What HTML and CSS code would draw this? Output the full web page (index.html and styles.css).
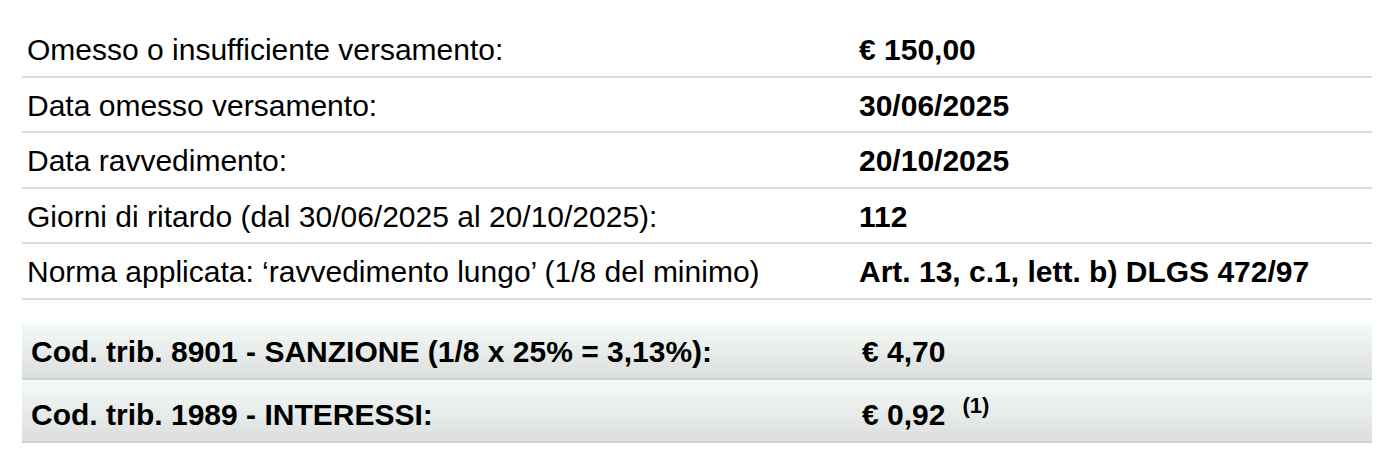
FILE: index.html
```html
<!DOCTYPE html>
<html lang="it">
<head>
<meta charset="utf-8">
<title>Ravvedimento</title>
<link rel="stylesheet" href="styles.css">
</head>
<body>
<div class="wrap">
  <table class="data">
    <tr><td class="lbl">Omesso o insufficiente versamento:</td><td class="val">€ 150,00</td></tr>
    <tr><td class="lbl">Data omesso versamento:</td><td class="val">30/06/2025</td></tr>
    <tr><td class="lbl">Data ravvedimento:</td><td class="val">20/10/2025</td></tr>
    <tr><td class="lbl">Giorni di ritardo (dal 30/06/2025 al 20/10/2025):</td><td class="val">112</td></tr>
    <tr><td class="lbl">Norma applicata: ‘ravvedimento lungo’ (1/8 del minimo)</td><td class="val">Art. 13, c.1, lett. b) DLGS 472/97</td></tr>
  </table>
  <table class="totals">
    <tr class="tot"><td class="lbl">Cod. trib. 8901 - SANZIONE (1/8 x 25% = 3,13%):</td><td class="val">€ 4,70</td></tr>
    <tr class="tot tot2"><td class="lbl">Cod. trib. 1989 - INTERESSI:</td><td class="val">€ 0,92<sup class="note">(1)</sup></td></tr>
  </table>
</div>
</body>
</html>
```
FILE: styles.css
```css
html, body {
  margin: 0;
  padding: 0;
  background: #ffffff;
}
body {
  font-family: "Liberation Sans", Arial, sans-serif;
  color: #000;
}
.wrap {
  padding: 21px 28px 0 22px;
}
table {
  width: 1350px;
  border-collapse: collapse;
  table-layout: fixed;
}
td {
  padding: 0;
  vertical-align: middle;
  box-sizing: border-box;
}
.data td {
  height: 55.5px;
  border-bottom: 2px solid #dcdcdc;
  font-size: 30px;
  line-height: 30px;
  padding-top: 3px;
}
.data td.lbl {
  width: 832px;
  padding-left: 5px;
}
.data td.val {
  padding-left: 5px;
  font-weight: bold;
}
.totals {
  margin-top: 23px;
}
.tot td {
  height: 56px;
  border-bottom: 2px solid #cfd1d1;
  background: linear-gradient(to bottom, #f3fbf6 0%, #e8ecea 50%, #dcdfdf 100%);
  font-size: 30px;
  font-weight: bold;
  line-height: 30px;
  padding-top: 4px;
}
.tot td.lbl {
  width: 832px;
  padding-left: 9px;
}
.tot td.val {
  padding-left: 8px;
}
.tot2 td {
  height: 63px;
  padding-top: 9px;
}
.note {
  font-size: 22px;
  margin-left: 17px;
  vertical-align: 12px;
  line-height: 0;
}
```
